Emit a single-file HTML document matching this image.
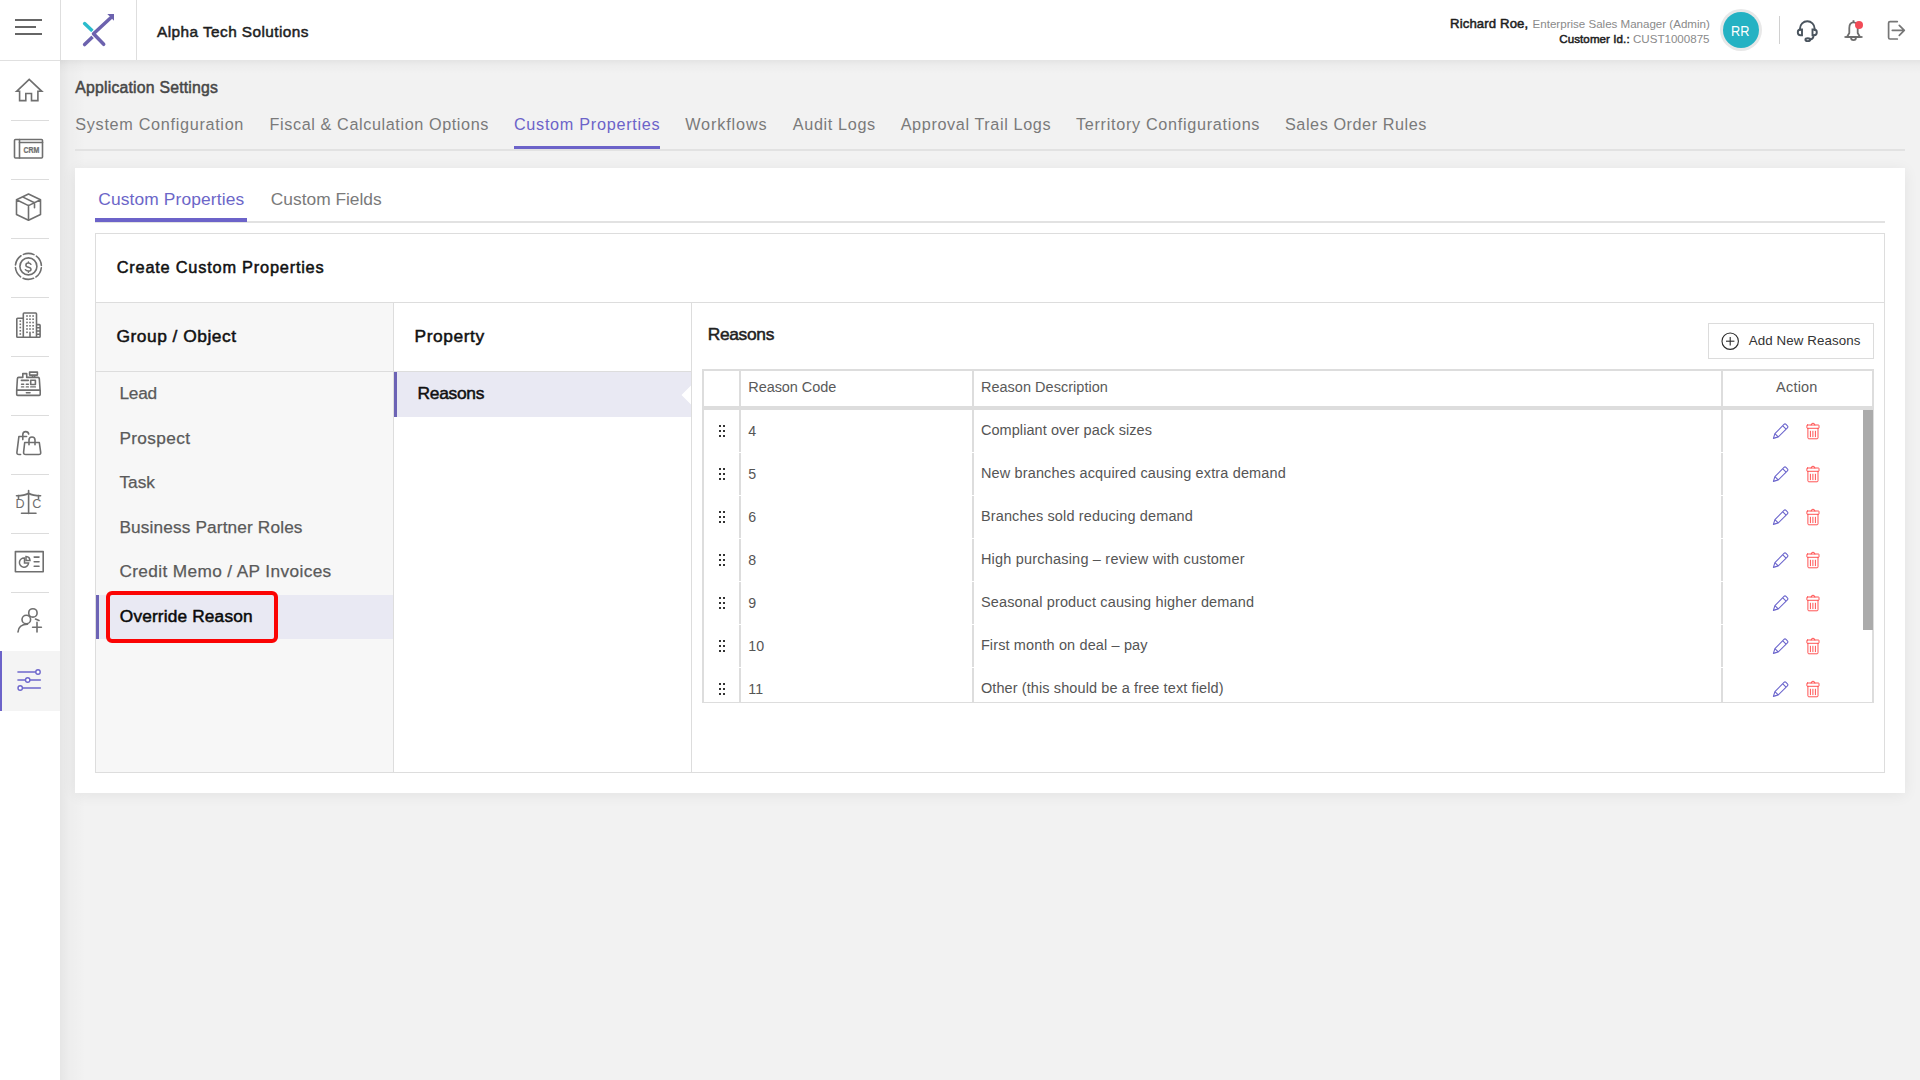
<!DOCTYPE html>
<html><head><meta charset="utf-8">
<style>
*{box-sizing:border-box;margin:0;padding:0}
html,body{width:1920px;height:1080px;overflow:hidden;background:#f2f2f2;font-family:"Liberation Sans",sans-serif}
.a{position:absolute}
.t{position:absolute;white-space:nowrap;line-height:1;font-family:"Liberation Sans",sans-serif}
svg{position:absolute;overflow:visible}
</style></head><body>
<!-- background shadows -->


<!-- sidebar bg -->
<div class="a" style="left:0;top:61px;width:60px;height:1019px;background:#fff"></div>
<div class="a" style="left:60px;top:60px;width:26px;height:1020px;background:linear-gradient(90deg,rgba(0,0,0,0.05),rgba(0,0,0,0.02) 35%,rgba(0,0,0,0))"></div>
<div class="a" style="left:60px;top:60px;width:1860px;height:14px;background:linear-gradient(rgba(0,0,0,0.06),rgba(0,0,0,0.02) 40%,rgba(0,0,0,0))"></div>
<!-- header -->
<div class="a" style="left:0;top:0;width:1920px;height:60px;background:#fff"></div>
<div class="a" style="left:0;top:60px;width:60px;height:1px;background:#e0e0e0"></div>
<div class="a" style="left:60px;top:0;width:1px;height:60px;background:#dedede"></div>
<div class="a" style="left:136px;top:0;width:1px;height:60px;background:#dedede"></div>
<!-- hamburger -->
<div class="a" style="left:15px;top:19px;width:27px;height:2px;background:#666"></div>
<div class="a" style="left:15px;top:26px;width:21px;height:2px;background:#666"></div>
<div class="a" style="left:15px;top:33px;width:27px;height:2px;background:#666"></div>
<!-- logo -->
<svg style="left:0;top:0" width="160" height="60">
 <g stroke-linecap="round" fill="none" stroke-width="3.5">
  <line x1="84.6" y1="23.6" x2="92" y2="30.6" stroke="#2bbccc"/>
  <line x1="84.6" y1="44.6" x2="93" y2="36.4" stroke="#6c62ae"/>
  <polyline points="110.5,18 93.5,33.8 103.7,44.3" stroke="#fff" stroke-width="5.6" stroke-linejoin="round" stroke-linecap="butt"/>
  <polyline points="110.5,18 93.5,33.8 103.7,44.3" stroke="#6c62ae" stroke-linejoin="round"/>
 </g>
 <polygon points="107.3,14 114,14 114,20.7" fill="#6c62ae"/>
</svg>
<!-- sidebar -->
<div class="a" style="left:0;top:651px;width:60px;height:60px;background:#f4f4f4"></div>
<div class="a" style="left:0;top:651px;width:2px;height:60px;background:#6c63c9"></div>
<div class="a" style="left:11px;top:120px;width:38px;height:1px;background:#dcdcdc"></div>
<div class="a" style="left:11px;top:179px;width:38px;height:1px;background:#dcdcdc"></div>
<div class="a" style="left:11px;top:238px;width:38px;height:1px;background:#dcdcdc"></div>
<div class="a" style="left:11px;top:297px;width:38px;height:1px;background:#dcdcdc"></div>
<div class="a" style="left:11px;top:356px;width:38px;height:1px;background:#dcdcdc"></div>
<div class="a" style="left:11px;top:415px;width:38px;height:1px;background:#dcdcdc"></div>
<div class="a" style="left:11px;top:474px;width:38px;height:1px;background:#dcdcdc"></div>
<div class="a" style="left:11px;top:533px;width:38px;height:1px;background:#dcdcdc"></div>
<div class="a" style="left:11px;top:592px;width:38px;height:1px;background:#dcdcdc"></div>
<svg style="left:0;top:0" width="60" height="720" viewBox="0 0 60 720">
<g fill="none" stroke="#6f6f6f" stroke-width="1.6" stroke-linejoin="round" stroke-linecap="round">
 <!-- home -->
 <path d="M16.6,91.3 L29.2,79.4 L41.8,91.3 H37.9 V100.6 H31.5 V93.5 H25.8 V100.6 H19.6 V91.3 Z" stroke-linejoin="miter"/>
 <!-- crm -->
 <rect x="14.5" y="139.5" width="28" height="18.5" rx="1"/>
 <line x1="19.5" y1="139.5" x2="19.5" y2="158"/>
 <line x1="19.5" y1="142.5" x2="42.5" y2="142.5"/>
 <!-- box -->
 <path d="M16.5,199.8 L28.5,194 L40.5,199.8 V214.5 L28.5,220.3 L16.5,214.5 Z M16.5,199.8 L28.5,205.6 L40.5,199.8 M28.5,205.6 V220.3 M22.5,196.9 L34.5,202.7 V207.7"/>
 <!-- coin -->
 <circle cx="28.4" cy="266.4" r="13" stroke-dasharray="10.8 2.8" stroke-dashoffset="12.2"/>
 <circle cx="28.4" cy="266.4" r="8.5"/>
 <path d="M30.9,264.3 Q30.1,263.1 28.4,263.1 Q25.9,263.1 25.9,265.2 Q25.9,266.7 28.4,267.2 Q31,267.7 31,269.5 Q31,271.1 28.4,271.1 Q26.3,271.1 25.4,269.7 M28.4,261.9 V263.1 M28.4,271.1 V272.2" stroke-width="1.5"/>
 <!-- building -->
 <path d="M23.3,337.2 H17.6 Q16.8,337.2 16.8,336.4 V319 Q16.8,318.2 17.6,318.2 H23.3 M23.3,337.2 V313.9 Q23.3,313 24.1,313 H35.7 Q36.5,313 36.5,313.9 V337.2 H23.3 M36.5,324.6 H39.3 Q40.1,324.6 40.1,325.4 V336.4 Q40.1,337.2 39.3,337.2 H36.5 M36.5,327.8 H40.1 M36.5,331 H40.1 M36.5,334.2 H40.1 M30,332.4 V337"/>
 <!-- register -->
 <path d="M22.8,377.4 H18.6 Q17.5,377.4 17.4,378.6 L16.7,390.1 H40.1 L39.3,378.6 Q39.2,377.4 38.1,377.4 H26.7 M16.7,390.1 V394.4 Q16.7,395.4 17.7,395.4 H39.2 Q40.2,395.4 40.2,394.4 V390.1 M22.8,377.4 V373.6 H26.7 V377.4 M21.4,380.4 H28.3 M29.6,372.1 H37.4 V375.1 H29.6 Z M32.5,375.1 V377.4 M34.6,375.1 V377.4 M30.7,380.3 H35.4 V384.5 H30.7 Z M26.4,392.8 H30"/>
 <path d="M21.5,384.3 H23.7 M26.3,384.3 H28.4 M21.5,386.9 H23.7 M26.3,386.9 H28.4 M30.7,386.9 H35.4" stroke-width="1.4"/>
 <!-- bags -->
 <path d="M26.6,436.5 H18.9 L16.9,452.3 Q16.7,454.5 19,454.5 H20.6 M22.8,439.6 V434.6 Q22.8,431.6 25.7,431.6 Q28.3,431.6 28.7,434"/>
 <path d="M24.7,442.5 H39.3 L40.7,452.3 Q41,454.5 38.7,454.5 H25.7 Q23.4,454.5 23.6,452.3 Z M29,444.8 V440 Q29,437 32,437 Q35,437 35,440 V444.8"/>
 <!-- scales -->
 <path d="M28.6,490.5 V513.5 M21.5,513.3 H36 M16.5,495.7 Q24.5,495.7 28.6,493.2 Q32.7,495.7 40.6,495.7 M18.5,495.6 V498.5 M38.5,495.6 V498.5"/>
 <!-- presentation -->
 <rect x="15.4" y="551.6" width="27.8" height="20.2"/>
 <path d="M34.2,557.1 H39 M34.2,561.7 H39 M34.2,566.3 H39"/>
 <!-- users -->
 <circle cx="32.9" cy="612.9" r="4.2"/>
 <circle cx="26.3" cy="619.5" r="4.3"/>
 <path d="M18,632 Q18.5,624.5 27.5,624.3 M35.5,619 L39,620.5 M37,622.4 V632 M32.6,627.2 H41.4"/>
</g>
<g fill="#6f6f6f" font-family="Liberation Sans" font-weight="700">
 <text x="23.6" y="153.2" font-size="8.2" letter-spacing="-0.1" stroke="#6f6f6f" stroke-width="0.25" transform="translate(23.6,0) scale(0.85,1) translate(-23.6,0)">CRM</text>
 <text x="15.6" y="507.7" font-size="12.6" font-weight="400">D</text>
 <text x="32.3" y="507.7" font-size="12.6" font-weight="400">C</text>
</g>
<g fill="#6f6f6f">
 <rect x="26.2" y="315.2" width="1.6" height="1.6"/><rect x="29.2" y="315.2" width="1.6" height="1.6"/><rect x="32.3" y="315.2" width="1.6" height="1.6"/><rect x="26.2" y="318.4" width="1.6" height="1.6"/><rect x="29.2" y="318.4" width="1.6" height="1.6"/><rect x="32.3" y="318.4" width="1.6" height="1.6"/><rect x="26.2" y="321.7" width="1.6" height="1.6"/><rect x="29.2" y="321.7" width="1.6" height="1.6"/><rect x="32.3" y="321.7" width="1.6" height="1.6"/><rect x="26.2" y="325.0" width="1.6" height="1.6"/><rect x="29.2" y="325.0" width="1.6" height="1.6"/><rect x="32.3" y="325.0" width="1.6" height="1.6"/><rect x="26.2" y="328.2" width="1.6" height="1.6"/><rect x="29.2" y="328.2" width="1.6" height="1.6"/><rect x="32.3" y="328.2" width="1.6" height="1.6"/><rect x="26.2" y="331.5" width="1.6" height="1.6"/><rect x="32.3" y="331.5" width="1.6" height="1.6"/><rect x="19.5" y="320.3" width="1.6" height="1.6"/><rect x="19.5" y="323.5" width="1.6" height="1.6"/><rect x="19.5" y="326.7" width="1.6" height="1.6"/><rect x="19.5" y="330.0" width="1.6" height="1.6"/><rect x="19.5" y="333.2" width="1.6" height="1.6"/>
 </g>
<!-- pie -->
<g fill="none" stroke="#6f6f6f" stroke-width="1.5">
 <path d="M24.5,558 A4.6,4.6 0 1 0 28.6,563 H24.5 Z"/>
 <path d="M26,556.5 V560.6 H30 A4.3,4.3 0 0 0 26,556.5 Z"/>
</g>
<!-- sliders (active) -->
<g fill="none" stroke="#6e67cc" stroke-width="1.65" stroke-linecap="round">
 <path d="M18,672 H35.8 M18,680 H25.5 M30,680 H40.3 M22.4,688 H40.3"/>
 <circle cx="38" cy="672" r="2.2" fill="#fff" stroke-width="1.4"/>
 <circle cx="27.7" cy="680" r="2.2" fill="#fff" stroke-width="1.4"/>
 <circle cx="20.2" cy="688" r="2.2" fill="#fff" stroke-width="1.4"/>
</g>
</svg>


<!-- header right -->
<div class="a" style="left:1720px;top:9px;width:42px;height:42px;border-radius:50%;background:#e8e8e8"></div>
<div class="a" style="left:1723px;top:12px;width:36px;height:36px;border-radius:50%;background:#25b2c3"></div>
<div class="a" style="left:1779px;top:16px;width:1px;height:28px;background:#d0d0d0"></div>
<svg style="left:0;top:0" width="1920" height="60" viewBox="0 0 1920 60">
 <!-- headset -->
 <g fill="none" stroke="#4a545e" stroke-width="1.9" stroke-linecap="round">
  <path d="M1800,30 V28.5 A7.3,7.3 0 0 1 1814.6,28.5 V30"/>
  <path d="M1802,29.5 H1800.5 Q1797.8,29.5 1797.8,32.3 Q1797.8,35.3 1800.5,35.3 H1802 Z"/>
  <path d="M1812.5,29.5 H1814 Q1816.8,29.5 1816.8,32.3 Q1816.8,35.3 1814,35.3 H1812.5 Z"/>
  <path d="M1813.5,35.5 Q1813.5,39 1810,39.5"/>
  <ellipse cx="1807.8" cy="39.7" rx="2.4" ry="1.4"/>
 </g>
 <!-- bell -->
 <g fill="none" stroke="#6e6e6e" stroke-width="1.8" stroke-linejoin="round">
  <path d="M1847,37 L1849.3,33 V28 Q1849.3,22.4 1853.5,22.4 Q1857.7,22.4 1857.7,28 V33 L1860,37 Z" transform="translate(0,0)"/>
  <path d="M1844.5,37 H1862.5"/>
  <path d="M1851,37.5 Q1851,40.2 1853.5,40.2 Q1856,40.2 1856,37.5"/>
  <path d="M1853.5,22.4 V20.2"/>
 </g>
 <circle cx="1859" cy="25" r="4" fill="#f24b57"/>
 <!-- logout -->
 <g fill="none" stroke="#767676" stroke-width="1.7" stroke-linecap="round" stroke-linejoin="round">
  <path d="M1897.3,21.6 H1890 Q1888.6,21.6 1888.6,23 V37.6 Q1888.6,39 1890,39 H1897.3"/>
  <path d="M1892.3,30.3 H1904.3 M1899.3,25.3 L1904.3,30.3 L1899.3,35.3"/>
 </g>
</svg>


<!-- tabs row -->
<div class="a" style="left:75px;top:149px;width:1830px;height:2px;background:#e2e2e2"></div>
<div class="a" style="left:514px;top:146px;width:146px;height:3px;background:#6c63c9"></div>

<!-- card -->
<div class="a" style="left:75px;top:168px;width:1830px;height:625px;background:#fff;box-shadow:0 2px 14px rgba(0,0,0,0.065)"></div>
<div class="a" style="left:95px;top:221px;width:1790px;height:2px;background:#e2e2e2"></div>
<div class="a" style="left:95px;top:218px;width:152px;height:4px;background:#6c63c9"></div>

<!-- panel -->
<div class="a" style="left:95px;top:233px;width:1790px;height:540px;border:1px solid #dddddd"></div>
<div class="a" style="left:96px;top:302px;width:1788px;height:1px;background:#dddddd"></div>
<div class="a" style="left:96px;top:303px;width:297px;height:469px;background:#f7f7f7"></div>
<div class="a" style="left:393px;top:303px;width:1px;height:469px;background:#dddddd"></div>
<div class="a" style="left:691px;top:303px;width:1px;height:469px;background:#dddddd"></div>
<div class="a" style="left:96px;top:371px;width:595px;height:1px;background:#dddddd"></div>
<!-- active group row -->
<div class="a" style="left:96px;top:595px;width:297px;height:44px;background:#e9e9f3"></div>
<div class="a" style="left:96px;top:595px;width:3px;height:44px;background:#6c63b5"></div>
<!-- red box -->
<div class="a" style="left:106px;top:591px;width:172px;height:52px;border:4px solid #fb0404;border-radius:6px"></div>
<!-- property active row -->
<div class="a" style="left:394px;top:372px;width:297px;height:45px;background:#e9e9f3"></div>
<div class="a" style="left:394px;top:372px;width:3px;height:45px;background:#6c63b5"></div>
<svg style="left:0;top:0" width="1" height="1"><polygon points="681.5,395 691,385.5 691,404.5" fill="#fff"/></svg>

<!-- add button -->
<div class="a" style="left:1708px;top:323px;width:166px;height:36px;border:1px solid #dcdcdc;background:#fff"></div>
<svg style="left:0;top:0" width="1" height="1">
 <circle cx="1730.2" cy="341.2" r="8.2" fill="none" stroke="#2b2b2b" stroke-width="1.1"/>
 <line x1="1726" y1="341.2" x2="1734.4" y2="341.2" stroke="#2b2b2b" stroke-width="1.1"/>
 <line x1="1730.2" y1="337" x2="1730.2" y2="345.4" stroke="#2b2b2b" stroke-width="1.1"/>
</svg>

<!-- table -->
<div class="a" style="left:702px;top:369px;width:1172px;height:334px;border:2px solid #dddddd;border-bottom-width:1px"></div>
<div class="a" style="left:704px;top:406px;width:1168px;height:4px;background:#dddddd"></div>
<div class="a" style="left:739px;top:371px;width:2px;height:35px;background:#dddddd"></div>
<div class="a" style="left:972px;top:371px;width:2px;height:35px;background:#dddddd"></div>
<div class="a" style="left:1721px;top:371px;width:2px;height:35px;background:#dddddd"></div>
<div class="a" style="left:739px;top:410px;width:2px;height:42px;background:#dddddd"></div>
<div class="a" style="left:972px;top:410px;width:2px;height:42px;background:#dddddd"></div>
<div class="a" style="left:1721px;top:410px;width:2px;height:42px;background:#dddddd"></div>
<div class="a" style="left:739px;top:453px;width:2px;height:42px;background:#dddddd"></div>
<div class="a" style="left:972px;top:453px;width:2px;height:42px;background:#dddddd"></div>
<div class="a" style="left:1721px;top:453px;width:2px;height:42px;background:#dddddd"></div>
<div class="a" style="left:739px;top:496px;width:2px;height:42px;background:#dddddd"></div>
<div class="a" style="left:972px;top:496px;width:2px;height:42px;background:#dddddd"></div>
<div class="a" style="left:1721px;top:496px;width:2px;height:42px;background:#dddddd"></div>
<div class="a" style="left:739px;top:539px;width:2px;height:42px;background:#dddddd"></div>
<div class="a" style="left:972px;top:539px;width:2px;height:42px;background:#dddddd"></div>
<div class="a" style="left:1721px;top:539px;width:2px;height:42px;background:#dddddd"></div>
<div class="a" style="left:739px;top:582px;width:2px;height:42px;background:#dddddd"></div>
<div class="a" style="left:972px;top:582px;width:2px;height:42px;background:#dddddd"></div>
<div class="a" style="left:1721px;top:582px;width:2px;height:42px;background:#dddddd"></div>
<div class="a" style="left:739px;top:625px;width:2px;height:42px;background:#dddddd"></div>
<div class="a" style="left:972px;top:625px;width:2px;height:42px;background:#dddddd"></div>
<div class="a" style="left:1721px;top:625px;width:2px;height:42px;background:#dddddd"></div>
<div class="a" style="left:739px;top:668px;width:2px;height:34px;background:#dddddd"></div>
<div class="a" style="left:972px;top:668px;width:2px;height:34px;background:#dddddd"></div>
<div class="a" style="left:1721px;top:668px;width:2px;height:34px;background:#dddddd"></div>
<div class="a" style="left:1863px;top:410px;width:10px;height:220px;background:#ababab"></div>
<div class="a" style="left:718.8px;top:425px;width:1.8px;height:2px;background:#333"></div>
<div class="a" style="left:718.8px;top:430px;width:1.8px;height:2px;background:#333"></div>
<div class="a" style="left:718.8px;top:435px;width:1.8px;height:2px;background:#333"></div>
<div class="a" style="left:722.8px;top:425px;width:1.8px;height:2px;background:#333"></div>
<div class="a" style="left:722.8px;top:430px;width:1.8px;height:2px;background:#333"></div>
<div class="a" style="left:722.8px;top:435px;width:1.8px;height:2px;background:#333"></div>
<svg style="left:1773px;top:423px" width="16" height="16" viewBox="0 0 16 16">
<path d="M0.4,15.4 L1.9,10.6 L11,1.4 Q12,0.4 13,1.4 L14.4,2.8 Q15.4,3.8 14.4,4.8 L5.3,13.9 Z M9.6,2.6 L12.8,5.8 M1.9,10.6 L5.2,13.9" fill="none" stroke="#6a64cc" stroke-width="1.1" stroke-linejoin="round"/></svg>
<svg style="left:1806px;top:423px" width="14" height="16" viewBox="0 0 14 16">
<path d="M5.1,2 Q5.1,0.2 7,0.2 Q8.9,0.2 8.9,2 M1.4,2 H12.5 Q13,2 13,2.5 V4.8 Q13,5.3 12.5,5.3 H1.4 Q0.9,5.3 0.9,4.8 V2.5 Q0.9,2 1.4,2 Z M1.9,5.3 V14.8 Q1.9,15.8 2.9,15.8 H11 Q12,15.8 12,14.8 V5.3 M4.4,8.2 V13.7 M6.9,8.2 V13.7 M9.4,8.2 V13.7" fill="none" stroke="#ff4a4a" stroke-width="0.95" stroke-linejoin="round" stroke-linecap="round"/></svg>
<div class="a" style="left:718.8px;top:468px;width:1.8px;height:2px;background:#333"></div>
<div class="a" style="left:718.8px;top:473px;width:1.8px;height:2px;background:#333"></div>
<div class="a" style="left:718.8px;top:478px;width:1.8px;height:2px;background:#333"></div>
<div class="a" style="left:722.8px;top:468px;width:1.8px;height:2px;background:#333"></div>
<div class="a" style="left:722.8px;top:473px;width:1.8px;height:2px;background:#333"></div>
<div class="a" style="left:722.8px;top:478px;width:1.8px;height:2px;background:#333"></div>
<svg style="left:1773px;top:466px" width="16" height="16" viewBox="0 0 16 16">
<path d="M0.4,15.4 L1.9,10.6 L11,1.4 Q12,0.4 13,1.4 L14.4,2.8 Q15.4,3.8 14.4,4.8 L5.3,13.9 Z M9.6,2.6 L12.8,5.8 M1.9,10.6 L5.2,13.9" fill="none" stroke="#6a64cc" stroke-width="1.1" stroke-linejoin="round"/></svg>
<svg style="left:1806px;top:466px" width="14" height="16" viewBox="0 0 14 16">
<path d="M5.1,2 Q5.1,0.2 7,0.2 Q8.9,0.2 8.9,2 M1.4,2 H12.5 Q13,2 13,2.5 V4.8 Q13,5.3 12.5,5.3 H1.4 Q0.9,5.3 0.9,4.8 V2.5 Q0.9,2 1.4,2 Z M1.9,5.3 V14.8 Q1.9,15.8 2.9,15.8 H11 Q12,15.8 12,14.8 V5.3 M4.4,8.2 V13.7 M6.9,8.2 V13.7 M9.4,8.2 V13.7" fill="none" stroke="#ff4a4a" stroke-width="0.95" stroke-linejoin="round" stroke-linecap="round"/></svg>
<div class="a" style="left:718.8px;top:511px;width:1.8px;height:2px;background:#333"></div>
<div class="a" style="left:718.8px;top:516px;width:1.8px;height:2px;background:#333"></div>
<div class="a" style="left:718.8px;top:521px;width:1.8px;height:2px;background:#333"></div>
<div class="a" style="left:722.8px;top:511px;width:1.8px;height:2px;background:#333"></div>
<div class="a" style="left:722.8px;top:516px;width:1.8px;height:2px;background:#333"></div>
<div class="a" style="left:722.8px;top:521px;width:1.8px;height:2px;background:#333"></div>
<svg style="left:1773px;top:509px" width="16" height="16" viewBox="0 0 16 16">
<path d="M0.4,15.4 L1.9,10.6 L11,1.4 Q12,0.4 13,1.4 L14.4,2.8 Q15.4,3.8 14.4,4.8 L5.3,13.9 Z M9.6,2.6 L12.8,5.8 M1.9,10.6 L5.2,13.9" fill="none" stroke="#6a64cc" stroke-width="1.1" stroke-linejoin="round"/></svg>
<svg style="left:1806px;top:509px" width="14" height="16" viewBox="0 0 14 16">
<path d="M5.1,2 Q5.1,0.2 7,0.2 Q8.9,0.2 8.9,2 M1.4,2 H12.5 Q13,2 13,2.5 V4.8 Q13,5.3 12.5,5.3 H1.4 Q0.9,5.3 0.9,4.8 V2.5 Q0.9,2 1.4,2 Z M1.9,5.3 V14.8 Q1.9,15.8 2.9,15.8 H11 Q12,15.8 12,14.8 V5.3 M4.4,8.2 V13.7 M6.9,8.2 V13.7 M9.4,8.2 V13.7" fill="none" stroke="#ff4a4a" stroke-width="0.95" stroke-linejoin="round" stroke-linecap="round"/></svg>
<div class="a" style="left:718.8px;top:554px;width:1.8px;height:2px;background:#333"></div>
<div class="a" style="left:718.8px;top:559px;width:1.8px;height:2px;background:#333"></div>
<div class="a" style="left:718.8px;top:564px;width:1.8px;height:2px;background:#333"></div>
<div class="a" style="left:722.8px;top:554px;width:1.8px;height:2px;background:#333"></div>
<div class="a" style="left:722.8px;top:559px;width:1.8px;height:2px;background:#333"></div>
<div class="a" style="left:722.8px;top:564px;width:1.8px;height:2px;background:#333"></div>
<svg style="left:1773px;top:552px" width="16" height="16" viewBox="0 0 16 16">
<path d="M0.4,15.4 L1.9,10.6 L11,1.4 Q12,0.4 13,1.4 L14.4,2.8 Q15.4,3.8 14.4,4.8 L5.3,13.9 Z M9.6,2.6 L12.8,5.8 M1.9,10.6 L5.2,13.9" fill="none" stroke="#6a64cc" stroke-width="1.1" stroke-linejoin="round"/></svg>
<svg style="left:1806px;top:552px" width="14" height="16" viewBox="0 0 14 16">
<path d="M5.1,2 Q5.1,0.2 7,0.2 Q8.9,0.2 8.9,2 M1.4,2 H12.5 Q13,2 13,2.5 V4.8 Q13,5.3 12.5,5.3 H1.4 Q0.9,5.3 0.9,4.8 V2.5 Q0.9,2 1.4,2 Z M1.9,5.3 V14.8 Q1.9,15.8 2.9,15.8 H11 Q12,15.8 12,14.8 V5.3 M4.4,8.2 V13.7 M6.9,8.2 V13.7 M9.4,8.2 V13.7" fill="none" stroke="#ff4a4a" stroke-width="0.95" stroke-linejoin="round" stroke-linecap="round"/></svg>
<div class="a" style="left:718.8px;top:597px;width:1.8px;height:2px;background:#333"></div>
<div class="a" style="left:718.8px;top:602px;width:1.8px;height:2px;background:#333"></div>
<div class="a" style="left:718.8px;top:607px;width:1.8px;height:2px;background:#333"></div>
<div class="a" style="left:722.8px;top:597px;width:1.8px;height:2px;background:#333"></div>
<div class="a" style="left:722.8px;top:602px;width:1.8px;height:2px;background:#333"></div>
<div class="a" style="left:722.8px;top:607px;width:1.8px;height:2px;background:#333"></div>
<svg style="left:1773px;top:595px" width="16" height="16" viewBox="0 0 16 16">
<path d="M0.4,15.4 L1.9,10.6 L11,1.4 Q12,0.4 13,1.4 L14.4,2.8 Q15.4,3.8 14.4,4.8 L5.3,13.9 Z M9.6,2.6 L12.8,5.8 M1.9,10.6 L5.2,13.9" fill="none" stroke="#6a64cc" stroke-width="1.1" stroke-linejoin="round"/></svg>
<svg style="left:1806px;top:595px" width="14" height="16" viewBox="0 0 14 16">
<path d="M5.1,2 Q5.1,0.2 7,0.2 Q8.9,0.2 8.9,2 M1.4,2 H12.5 Q13,2 13,2.5 V4.8 Q13,5.3 12.5,5.3 H1.4 Q0.9,5.3 0.9,4.8 V2.5 Q0.9,2 1.4,2 Z M1.9,5.3 V14.8 Q1.9,15.8 2.9,15.8 H11 Q12,15.8 12,14.8 V5.3 M4.4,8.2 V13.7 M6.9,8.2 V13.7 M9.4,8.2 V13.7" fill="none" stroke="#ff4a4a" stroke-width="0.95" stroke-linejoin="round" stroke-linecap="round"/></svg>
<div class="a" style="left:718.8px;top:640px;width:1.8px;height:2px;background:#333"></div>
<div class="a" style="left:718.8px;top:645px;width:1.8px;height:2px;background:#333"></div>
<div class="a" style="left:718.8px;top:650px;width:1.8px;height:2px;background:#333"></div>
<div class="a" style="left:722.8px;top:640px;width:1.8px;height:2px;background:#333"></div>
<div class="a" style="left:722.8px;top:645px;width:1.8px;height:2px;background:#333"></div>
<div class="a" style="left:722.8px;top:650px;width:1.8px;height:2px;background:#333"></div>
<svg style="left:1773px;top:638px" width="16" height="16" viewBox="0 0 16 16">
<path d="M0.4,15.4 L1.9,10.6 L11,1.4 Q12,0.4 13,1.4 L14.4,2.8 Q15.4,3.8 14.4,4.8 L5.3,13.9 Z M9.6,2.6 L12.8,5.8 M1.9,10.6 L5.2,13.9" fill="none" stroke="#6a64cc" stroke-width="1.1" stroke-linejoin="round"/></svg>
<svg style="left:1806px;top:638px" width="14" height="16" viewBox="0 0 14 16">
<path d="M5.1,2 Q5.1,0.2 7,0.2 Q8.9,0.2 8.9,2 M1.4,2 H12.5 Q13,2 13,2.5 V4.8 Q13,5.3 12.5,5.3 H1.4 Q0.9,5.3 0.9,4.8 V2.5 Q0.9,2 1.4,2 Z M1.9,5.3 V14.8 Q1.9,15.8 2.9,15.8 H11 Q12,15.8 12,14.8 V5.3 M4.4,8.2 V13.7 M6.9,8.2 V13.7 M9.4,8.2 V13.7" fill="none" stroke="#ff4a4a" stroke-width="0.95" stroke-linejoin="round" stroke-linecap="round"/></svg>
<div class="a" style="left:718.8px;top:683px;width:1.8px;height:2px;background:#333"></div>
<div class="a" style="left:718.8px;top:688px;width:1.8px;height:2px;background:#333"></div>
<div class="a" style="left:718.8px;top:693px;width:1.8px;height:2px;background:#333"></div>
<div class="a" style="left:722.8px;top:683px;width:1.8px;height:2px;background:#333"></div>
<div class="a" style="left:722.8px;top:688px;width:1.8px;height:2px;background:#333"></div>
<div class="a" style="left:722.8px;top:693px;width:1.8px;height:2px;background:#333"></div>
<svg style="left:1773px;top:681px" width="16" height="16" viewBox="0 0 16 16">
<path d="M0.4,15.4 L1.9,10.6 L11,1.4 Q12,0.4 13,1.4 L14.4,2.8 Q15.4,3.8 14.4,4.8 L5.3,13.9 Z M9.6,2.6 L12.8,5.8 M1.9,10.6 L5.2,13.9" fill="none" stroke="#6a64cc" stroke-width="1.1" stroke-linejoin="round"/></svg>
<svg style="left:1806px;top:681px" width="14" height="16" viewBox="0 0 14 16">
<path d="M5.1,2 Q5.1,0.2 7,0.2 Q8.9,0.2 8.9,2 M1.4,2 H12.5 Q13,2 13,2.5 V4.8 Q13,5.3 12.5,5.3 H1.4 Q0.9,5.3 0.9,4.8 V2.5 Q0.9,2 1.4,2 Z M1.9,5.3 V14.8 Q1.9,15.8 2.9,15.8 H11 Q12,15.8 12,14.8 V5.3 M4.4,8.2 V13.7 M6.9,8.2 V13.7 M9.4,8.2 V13.7" fill="none" stroke="#ff4a4a" stroke-width="0.95" stroke-linejoin="round" stroke-linecap="round"/></svg>

<div class="t" style="left:157.1px;top:23.54px;font-size:15.36px;font-weight:400;color:#1e1e1e;letter-spacing:0.433px;-webkit-text-stroke:0.5px #1e1e1e">Alpha Tech Solutions</div>
<div class="t" style="left:1450.0px;top:17.29px;font-size:13.19px;font-weight:400;color:#1e1e1e;letter-spacing:0.112px;-webkit-text-stroke:0.5px #1e1e1e">Richard Roe,</div>
<div class="t" style="left:1532.6px;top:18.65px;font-size:11.59px;font-weight:400;color:#8a8a8a;letter-spacing:-0.013px">Enterprise Sales Manager (Admin)</div>
<div class="t" style="left:1559.3px;top:34.25px;font-size:11.59px;font-weight:400;color:#1e1e1e;letter-spacing:0.067px;-webkit-text-stroke:0.5px #1e1e1e">Customer Id.:</div>
<div class="t" style="left:1633.0px;top:34.25px;font-size:11.59px;font-weight:400;color:#8a8a8a;letter-spacing:-0.009px">CUST1000875</div>
<div class="t" style="left:1730.8px;top:23.34px;font-size:15.36px;font-weight:400;color:#ffffff;letter-spacing:0.000px;transform:scaleX(0.83);transform-origin:0 0">RR</div>
<div class="t" style="left:75.2px;top:79.87px;font-size:15.8px;font-weight:400;color:#474747;letter-spacing:0.213px;-webkit-text-stroke:0.5px #474747">Application Settings</div>
<div class="t" style="left:75.3px;top:116.20px;font-size:16.23px;font-weight:400;color:#7a7a7a;letter-spacing:0.686px">System Configuration</div>
<div class="t" style="left:269.6px;top:116.20px;font-size:16.23px;font-weight:400;color:#7a7a7a;letter-spacing:0.592px">Fiscal &amp; Calculation Options</div>
<div class="t" style="left:513.9px;top:116.20px;font-size:16.23px;font-weight:400;color:#6c63c9;letter-spacing:0.718px">Custom Properties</div>
<div class="t" style="left:685.2px;top:116.20px;font-size:16.23px;font-weight:400;color:#7a7a7a;letter-spacing:0.862px">Workflows</div>
<div class="t" style="left:792.8px;top:116.20px;font-size:16.23px;font-weight:400;color:#7a7a7a;letter-spacing:0.638px">Audit Logs</div>
<div class="t" style="left:900.7px;top:116.20px;font-size:16.23px;font-weight:400;color:#7a7a7a;letter-spacing:0.614px">Approval Trail Logs</div>
<div class="t" style="left:1076.0px;top:116.20px;font-size:16.23px;font-weight:400;color:#7a7a7a;letter-spacing:0.688px">Territory Configurations</div>
<div class="t" style="left:1285.0px;top:116.20px;font-size:16.23px;font-weight:400;color:#7a7a7a;letter-spacing:0.555px">Sales Order Rules</div>
<div class="t" style="left:98.3px;top:191.02px;font-size:17.39px;font-weight:400;color:#6c66c8;letter-spacing:0.126px">Custom Properties</div>
<div class="t" style="left:270.8px;top:191.02px;font-size:17.39px;font-weight:400;color:#7a7a7a;letter-spacing:-0.012px">Custom Fields</div>
<div class="t" style="left:116.7px;top:259.08px;font-size:16.38px;font-weight:400;color:#111111;letter-spacing:0.777px;-webkit-text-stroke:0.5px #111111">Create Custom Properties</div>
<div class="t" style="left:116.5px;top:327.62px;font-size:17.39px;font-weight:400;color:#111111;letter-spacing:0.500px;-webkit-text-stroke:0.5px #111111">Group / Object</div>
<div class="t" style="left:414.6px;top:328.02px;font-size:17.39px;font-weight:400;color:#111111;letter-spacing:0.561px;-webkit-text-stroke:0.5px #111111">Property</div>
<div class="t" style="left:707.7px;top:326.32px;font-size:17.39px;font-weight:400;color:#222222;letter-spacing:-0.313px;-webkit-text-stroke:0.5px #222222">Reasons</div>
<div class="t" style="left:119.4px;top:384.84px;font-size:17.25px;font-weight:400;color:#5a5a5a;letter-spacing:-0.225px;-webkit-text-stroke:0.25px #5a5a5a">Lead</div>
<div class="t" style="left:119.4px;top:429.84px;font-size:17.25px;font-weight:400;color:#5a5a5a;letter-spacing:0.360px;-webkit-text-stroke:0.25px #5a5a5a">Prospect</div>
<div class="t" style="left:119.4px;top:473.94px;font-size:17.25px;font-weight:400;color:#5a5a5a;letter-spacing:0.044px;-webkit-text-stroke:0.25px #5a5a5a">Task</div>
<div class="t" style="left:119.4px;top:518.94px;font-size:17.25px;font-weight:400;color:#5a5a5a;letter-spacing:0.136px;-webkit-text-stroke:0.25px #5a5a5a">Business Partner Roles</div>
<div class="t" style="left:119.4px;top:562.74px;font-size:17.25px;font-weight:400;color:#5a5a5a;letter-spacing:0.371px;-webkit-text-stroke:0.25px #5a5a5a">Credit Memo / AP Invoices</div>
<div class="t" style="left:119.8px;top:608.44px;font-size:17.25px;font-weight:400;color:#0a0a0a;letter-spacing:0.167px;-webkit-text-stroke:0.5px #0a0a0a">Override Reason</div>
<div class="t" style="left:417.5px;top:384.92px;font-size:17.39px;font-weight:400;color:#111111;letter-spacing:-0.280px;-webkit-text-stroke:0.5px #111111">Reasons</div>
<div class="t" style="left:1748.7px;top:334.17px;font-size:13.33px;font-weight:400;color:#333333;letter-spacing:0.094px">Add New Reasons</div>
<div class="t" style="left:748.3px;top:380.18px;font-size:14.49px;font-weight:400;color:#5a5a5a;letter-spacing:-0.068px">Reason Code</div>
<div class="t" style="left:980.9px;top:380.18px;font-size:14.49px;font-weight:400;color:#5a5a5a;letter-spacing:0.035px">Reason Description</div>
<div class="t" style="left:1776.1px;top:380.18px;font-size:14.49px;font-weight:400;color:#5a5a5a;letter-spacing:0.207px">Action</div>
<div class="t" style="left:748.3px;top:423.63px;font-size:14.2px;font-weight:400;color:#555555;letter-spacing:0.000px">4</div>
<div class="t" style="left:980.9px;top:423.38px;font-size:14.49px;font-weight:400;color:#555555;letter-spacing:0.085px">Compliant over pack sizes</div>
<div class="t" style="left:748.3px;top:466.63px;font-size:14.2px;font-weight:400;color:#555555;letter-spacing:0.000px">5</div>
<div class="t" style="left:980.9px;top:466.38px;font-size:14.49px;font-weight:400;color:#555555;letter-spacing:0.151px">New branches acquired causing extra demand</div>
<div class="t" style="left:748.3px;top:509.63px;font-size:14.2px;font-weight:400;color:#555555;letter-spacing:0.000px">6</div>
<div class="t" style="left:980.9px;top:509.38px;font-size:14.49px;font-weight:400;color:#555555;letter-spacing:0.152px">Branches sold reducing demand</div>
<div class="t" style="left:748.3px;top:552.63px;font-size:14.2px;font-weight:400;color:#555555;letter-spacing:0.000px">8</div>
<div class="t" style="left:980.9px;top:552.38px;font-size:14.49px;font-weight:400;color:#555555;letter-spacing:0.205px">High purchasing – review with customer</div>
<div class="t" style="left:748.3px;top:595.63px;font-size:14.2px;font-weight:400;color:#555555;letter-spacing:0.000px">9</div>
<div class="t" style="left:980.9px;top:595.38px;font-size:14.49px;font-weight:400;color:#555555;letter-spacing:0.156px">Seasonal product causing higher demand</div>
<div class="t" style="left:748.3px;top:638.63px;font-size:14.2px;font-weight:400;color:#555555;letter-spacing:0.000px">10</div>
<div class="t" style="left:980.9px;top:638.38px;font-size:14.49px;font-weight:400;color:#555555;letter-spacing:0.132px">First month on deal – pay</div>
<div class="t" style="left:748.3px;top:681.63px;font-size:14.2px;font-weight:400;color:#555555;letter-spacing:0.000px">11</div>
<div class="t" style="left:980.9px;top:681.38px;font-size:14.49px;font-weight:400;color:#555555;letter-spacing:0.110px">Other (this should be a free text field)</div>
</body></html>
